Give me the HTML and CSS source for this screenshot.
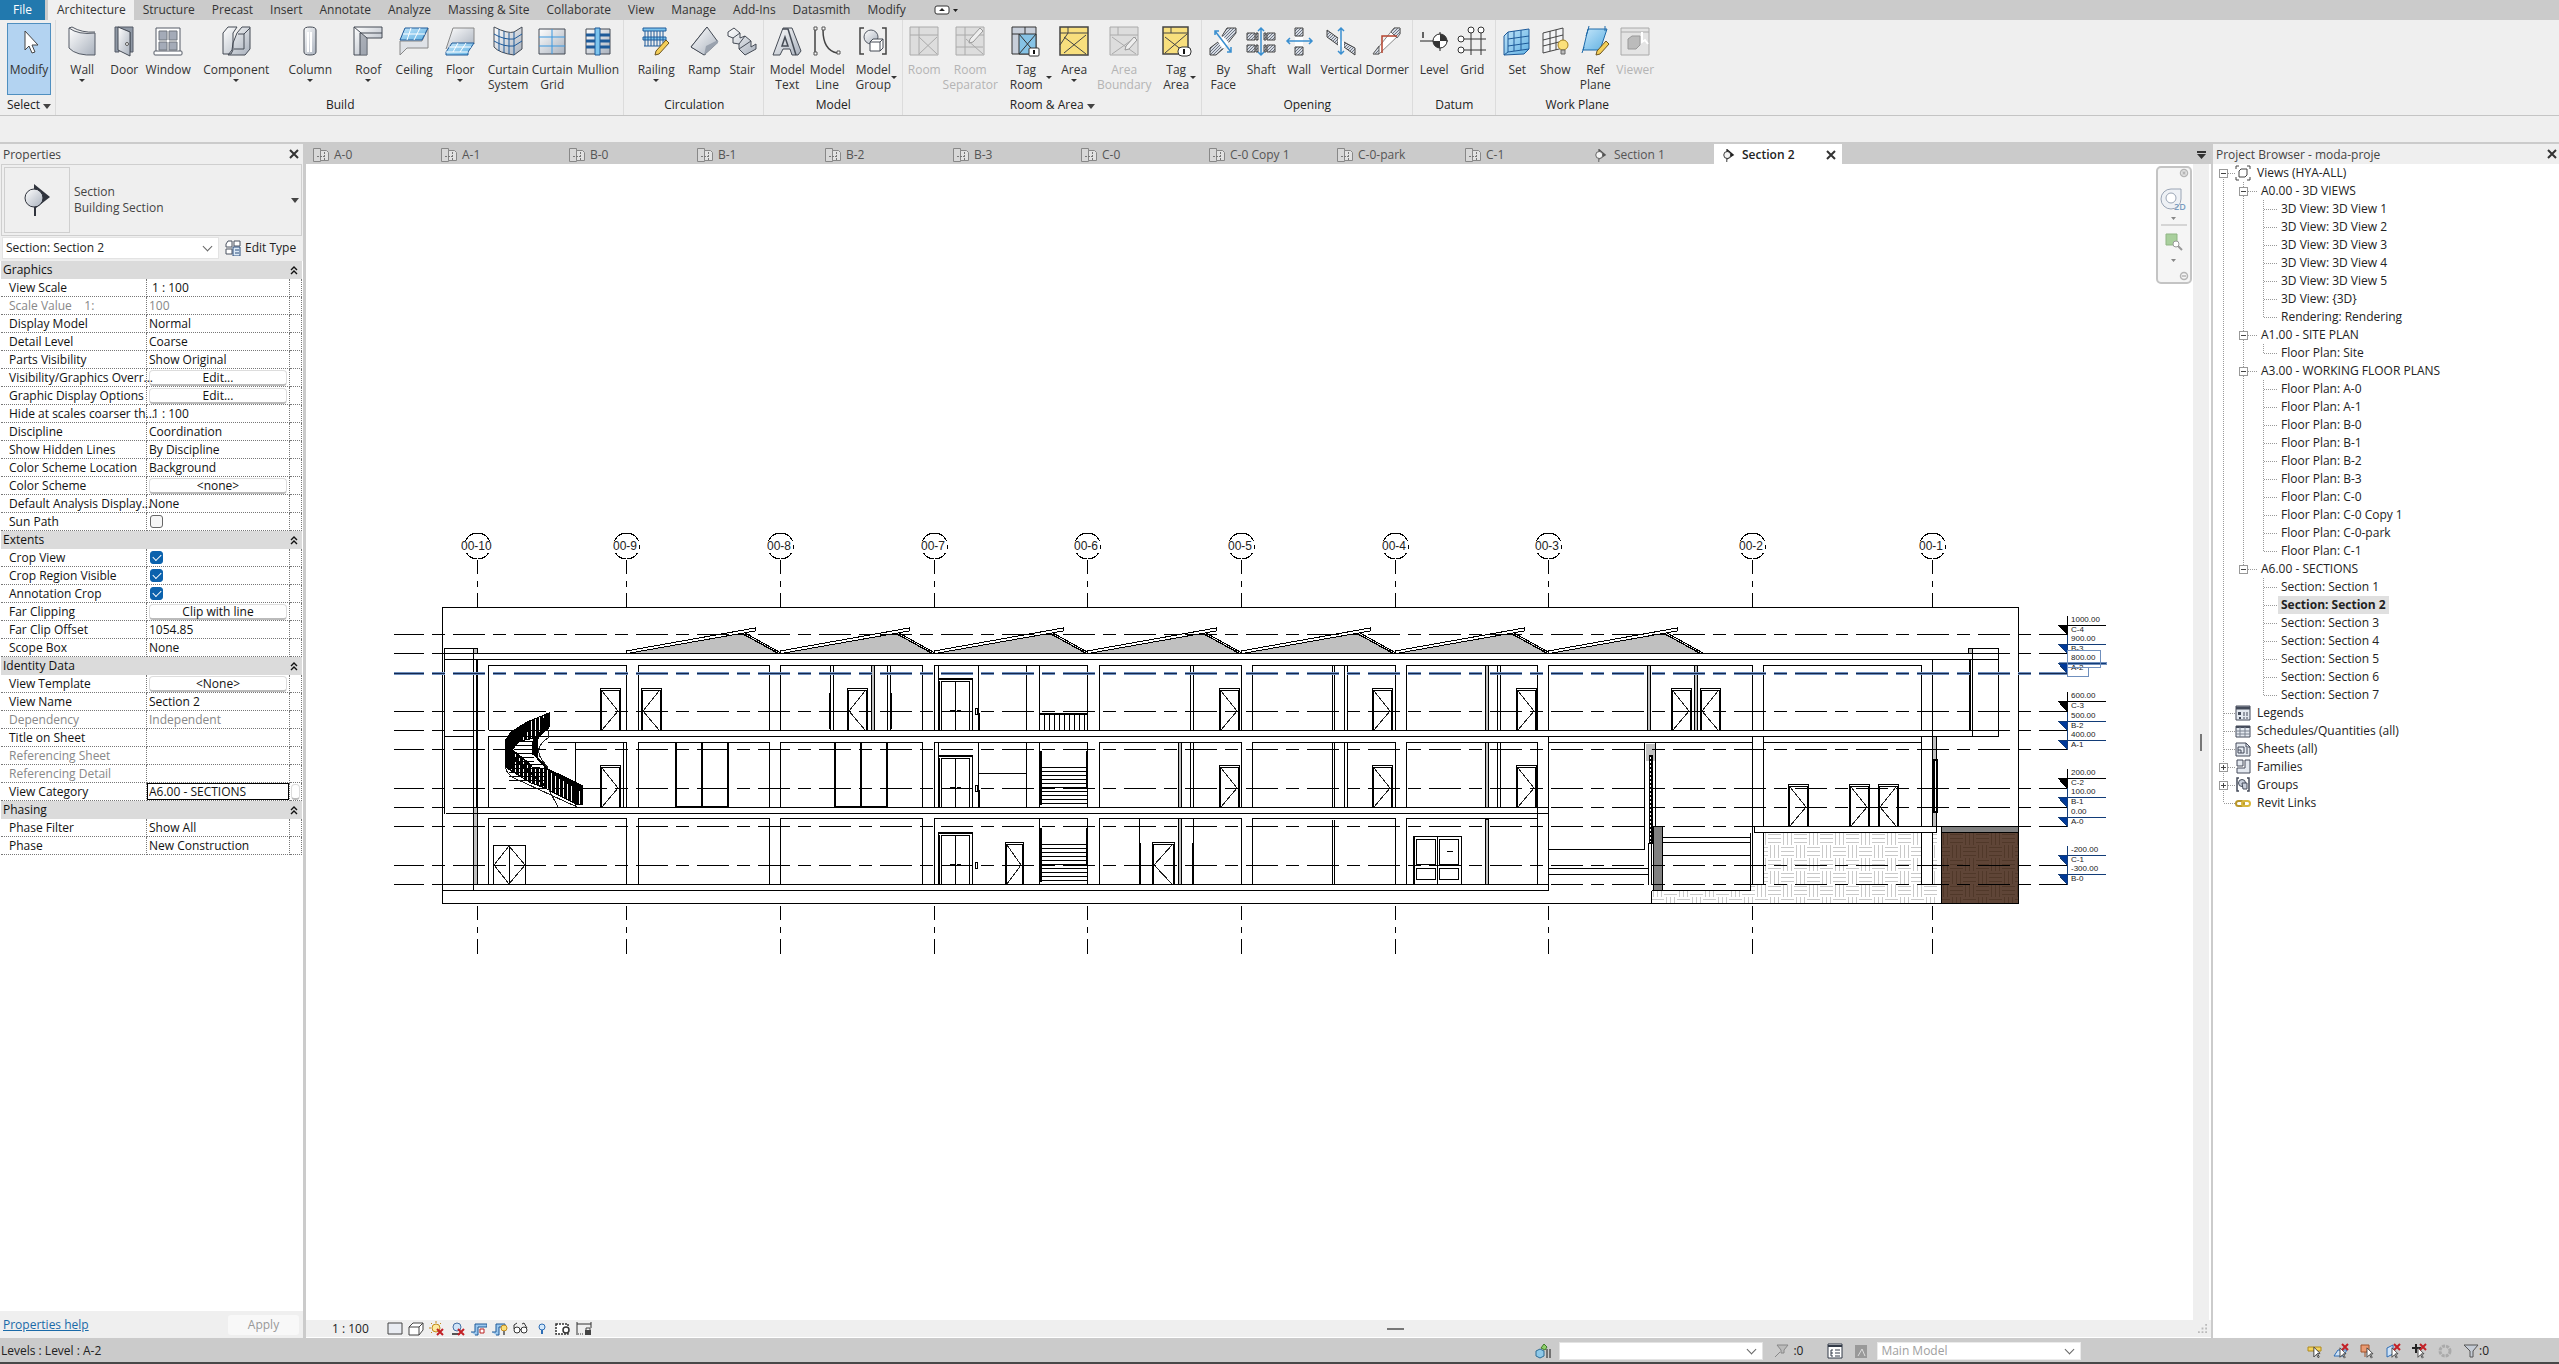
FILE: index.html
```
<!DOCTYPE html>
<html lang="en">

<head>
  <meta charset="utf-8">
  <title>moda-proje - Section 2</title>
  <link rel="stylesheet" href="styles.css">
</head>

<body>
  <svg class="defs" aria-hidden="true">
    <defs>
      <linearGradient id="metal" x1="0" y1="0" x2="1" y2="1">
        <stop offset="0" stop-color="#ffffff" />
        <stop offset="1" stop-color="#a9b1bd" />
      </linearGradient>
      <linearGradient id="sky" x1="0" y1="0" x2="1" y2="1">
        <stop offset="0" stop-color="#c4e6fa" />
        <stop offset="1" stop-color="#5fb0e2" />
      </linearGradient>
      <pattern id="slash" width="3" height="3" patternUnits="userSpaceOnUse">
        <rect width="3" height="3" fill="#d5dae2" />
        <path d="M0 3L3 0" stroke="#6c7482" stroke-width="1" />
      </pattern>
      <symbol id="plan" viewBox="0 0 18 16">
        <path d="M1.500 1.500h7v13h-7z" fill="#d8d8d8" stroke="#888" />
        <path d="M8.500 3.500h6l2 2v8h-8z" fill="#e2e2e2" stroke="#888" />
        <path d="M5 9.500h8M12.500 5v8" fill="none" stroke="#777" stroke-dasharray="2 1" />
      </symbol>
      <symbol id="section" viewBox="0 0 16 16">
        <path d="M6 1l8 7-8 5v3H5V1z" />
        <circle cx="6" cy="8" r="4" fill="#f4f4f4" stroke="currentColor" />
      </symbol>
      <symbol id="close" viewBox="0 0 10 10">
        <path d="M1 1l8 8M9 1L1 9" fill="none" stroke="#333" stroke-width="2" />
      </symbol>
      <symbol id="up" viewBox="0 0 8 10">
        <path d="M1 5l3-3 3 3M1 9l3-3 3 3" fill="none" stroke="#111" stroke-width="1.4" />
      </symbol>
      <symbol id="cross" viewBox="0 0 8 8">
        <path d="M1 1l6 6M7 1L1 7" fill="none" stroke="#c32026" stroke-width="2" />
      </symbol>
      <symbol id="arrow" viewBox="0 0 9 14">
        <path d="M1 1v11l3-3 2 4 1-1-2-4h3z" fill="#fff" stroke="#333" />
      </symbol>
    </defs>
  </svg>

  <nav class="menu">
    <a class="file" href="#">File</a>
    <a class="current" href="#">Architecture</a>
    <a href="#">Structure</a>
    <a href="#">Precast</a>
    <a href="#">Insert</a>
    <a href="#">Annotate</a>
    <a href="#">Analyze</a>
    <a href="#">Massing &amp; Site</a>
    <a href="#">Collaborate</a>
    <a href="#">View</a>
    <a href="#">Manage</a>
    <a href="#">Add-Ins</a>
    <a href="#">Datasmith</a>
    <a href="#">Modify</a>
    <button class="minimize" aria-label="Minimize ribbon">
      <svg width="26" height="10" viewBox="0 0 26 10">
        <rect x="1" y="1" width="14" height="8" rx="2" fill="#fff" stroke="#333" />
        <path d="M5 6l3-3 3 3zM19 4h5l-2.500 3z" fill="#222" />
      </svg>
    </button>
  </nav>

  <div class="ribbon">
    <section class="panel select">
      <div class="tools">
        <button class="tool w44 active"><svg viewBox="0 0 32 32"><path d="M12 6v19l4-4 3 7 3-1-3-7h6z" fill="#fff" stroke="#444" /></svg>Modify</button>
      </div>
      <h2>Select <i class="caret"></i></h2>
    </section>

    <section class="panel">
      <div class="tools">
        <button class="tool w44"><svg viewBox="0 0 32 32"><path d="M3 3q9 7 26 5v22Q10 31 3 23z" fill="url(#metal)" stroke="#555b66" /><path d="M3 3l3-1q10 6 23 5" fill="none" stroke="#555b66" /></svg>Wall<i class="drop"></i></button>
        <button class="tool w40"><svg viewBox="0 0 32 32"><path d="M7 27V2h18v25h-3V7L11 3v24z" fill="#8f98a5" stroke="#555b66" /><path d="M10 2l12 5v24l-12-6z" fill="url(#metal)" stroke="#454b55" /><circle cx="19" cy="19" r="1.500" fill="#fff" stroke="#555" /></svg>Door</button>
        <button class="tool w48"><svg viewBox="0 0 32 32"><path d="M4 3h24v24H4z" fill="#fff" stroke="#555b66" /><path d="M7 6h8v9H7zM17 6h8v9h-8zM7 17h8v8H7zM17 17h8v8h-8z" fill="#a4abb8" stroke="#70767f" /><rect x="2" y="26" width="28" height="4" rx="1" fill="#fff" stroke="#555b66" /></svg>Window</button>
        <button class="tool w88"><svg viewBox="0 0 32 32"><path d="M3 8l5-6h9l-4 6v17l-2 4H3zM13 18l4-10 5-6h8v22l-5 6H8l4-5z" fill="url(#metal)" stroke="#454b55" /><path d="M18 9h6v15H14M24 9l6-6" fill="none" stroke="#454b55" /></svg>Component<i class="drop"></i></button>
        <button class="tool w60"><svg viewBox="0 0 32 32"><path d="M10 5q0-3 6-3t6 3v22q0 3-6 3t-6-3z" fill="url(#metal)" stroke="#454b55" /><path d="M14 7v20M17 7v20" stroke="#fff" stroke-width="2" /></svg>Column<i class="drop"></i></button>
        <button class="tool w56"><svg viewBox="0 0 32 32"><path d="M2 2h28v11H15v17H2z" fill="url(#metal)" stroke="#454b55" /><path d="M8 8l7 5v17H8z" fill="#858c98" opacity=".6" /><path d="M2 2l13 11M8 8v22M8 8h22" fill="none" stroke="#454b55" /></svg>Roof<i class="drop"></i></button>
        <button class="tool w36"><svg viewBox="0 0 32 32"><path d="M2 16h22l6-13v20H9l-7 7z" fill="#dfe2e7" stroke="#888" /><path d="M7 3h23l-6 12H2z" fill="url(#sky)" stroke="#1e5a99" /><path d="M13 3L9 15M22 3l-6 12M5 9h22" stroke="#fff" /></svg>Ceiling</button>
        <button class="tool w56"><svg viewBox="0 0 32 32"><path d="M2 24l7-21h21v16" fill="url(#metal)" stroke="#888" /><path d="M8 18h22l-6 9v3H2v-3z" fill="url(#sky)" stroke="#1e5a99" /><path d="M2 27h22M14 18l-5 9M22 18l-6 9M5 22h22" stroke="#fff" /></svg>Floor<i class="drop"></i></button>
        <button class="tool w40"><svg viewBox="0 0 32 32"><path d="M2 2q14 7 20 5l8-5v22l-8 6Q7 28 2 22z" fill="url(#metal)" stroke="#454b55" /><path d="M22 7v23M17 8v21M12 6v22M7 4v22M2 9q10 6 20 5l8-5M2 16q10 6 20 5l8-5" fill="none" stroke="#1e5a99" /></svg>Curtain<br>System</button>
        <button class="tool w48"><svg viewBox="0 0 32 32"><path d="M3 4h26v25H3z" fill="url(#metal)" stroke="#454b55" /><path d="M16 4v25M3 12h26M3 21h26" stroke="#3a98e0" /></svg>Curtain<br>Grid</button>
        <button class="tool w44"><svg viewBox="0 0 32 32"><path d="M4 4h24v25H4z" fill="url(#metal)" stroke="#454b55" /><path d="M4 10h24M4 16h24M4 22h24" stroke="#1e5a99" stroke-width="3" /><path d="M13 3h5v27h-5z" fill="#7cc4ee" stroke="#1e5a99" /></svg>Mullion</button>
      </div>
      <h2>Build</h2>
    </section>

    <section class="panel">
      <div class="tools">
        <button class="tool w56"><svg viewBox="0 0 32 32"><path d="M3 3h23v3H3zM3 12h23v3H3zM4 21h18" fill="#7cc4ee" stroke="#1e5a99" /><path d="M5 6v15M8 6v15M11 6v15M14 6v15M17 6v15M20 6v15M23 6v12" stroke="#1e5a99" /><path d="M26 15l3 3-10 11-4 1 1-4z" fill="#f5cf58" stroke="#6b5420" /></svg>Railing<i class="drop"></i></button>
        <button class="tool w40"><svg viewBox="0 0 32 32"><path d="M3 22L19 2l-2 28z" fill="#fff" stroke="#454b55" /><path d="M3 22L19 2l11 15-14 13z" fill="url(#metal)" stroke="#454b55" /><path d="M16 30l2-9L30 15v3z" fill="#9aa2ae" /></svg>Ramp</button>
        <button class="tool w36"><svg viewBox="0 0 32 32"><path d="M2 7l6-4 6 5v5l5-2 6 5v6l5-3v5L19 30l-6-6v-5l-6-1v-5l-5-2z" fill="url(#metal)" stroke="#454b55" /><path d="M14 8l-7 5M19 11l-6 8M25 16l-12 8" stroke="#454b55" /></svg>Stair</button>
      </div>
      <h2>Circulation</h2>
    </section>

    <section class="panel tight">
      <div class="tools">
        <button class="tool w40"><svg viewBox="0 0 32 32"><path d="M12 3h9l9 23-3 4h-6l-2-6h-7l-3 6H2z" fill="url(#metal)" stroke="#454b55" /><path d="M12 4h5l8 26M14 12l-3 9h6z" fill="none" stroke="#454b55" stroke-width="1.500" /></svg>Model<br>Text</button>
        <button class="tool w40"><svg viewBox="0 0 32 32"><path d="M4 5v23M12 5q0 20 14 23" fill="none" stroke="#444" stroke-width="1.500" /><path d="M3 2h3v3H3zM3 27h3v3H3zM11 2h3v3h-3zM26 26h3v3h-3z" fill="#fff" stroke="#555" /></svg>Model<br>Line</button>
        <button class="tool w52"><svg viewBox="0 0 32 32"><path d="M7 3H3v26h4M25 3h4v26h-4" fill="none" stroke="#444" stroke-width="1.500" /><circle cx="14" cy="12" r="7" fill="url(#metal)" stroke="#555b66" /><path d="M13 17l3-3h10v9l-3 3H13zM13 17h10v9M23 17l3-3" fill="#fff" stroke="#454b55" /></svg>Model<br>Group<i class="drop side"></i></button>
      </div>
      <h2>Model</h2>
    </section>

    <section class="panel tight">
      <div class="tools">
        <button class="tool w36" disabled><svg viewBox="0 0 32 32"><path d="M2 2h28v28H2z" fill="#ddd" stroke="#aaa" /><path d="M2 10h28M11 2v28M11 12l18 17M29 12L11 29" fill="none" stroke="#aaa" /></svg>Room</button>
        <button class="tool w56" disabled><svg viewBox="0 0 32 32"><path d="M2 2h28v28H2z" fill="#ddd" stroke="#aaa" /><path d="M2 10h28M11 2v28M12 14l17 15M2 22h27" fill="none" stroke="#aaa" /><path d="M26 3l3 3-10 11-4 1 1-4z" fill="#eee" stroke="#999" /></svg>Room<br>Separator</button>
        <button class="tool w56"><svg viewBox="0 0 32 32"><path d="M2 2h24v27H2z" fill="#c8cfda" stroke="#333" /><path d="M9 9h17v20H9z" fill="#86c3e6" stroke="#333" /><path d="M9 9l17 20M26 9L9 29M2 9h7M15 2v7" stroke="#333" /><rect x="19" y="23" width="10" height="8" rx="1" fill="#fff" stroke="#333" /><path d="M24 25v4" stroke="#111" stroke-width="2" /></svg>Tag<br>Room<i class="drop side"></i></button>
        <button class="tool w40"><svg viewBox="0 0 32 32"><path d="M2 2h28v28H2z" fill="#f8df7d" stroke="#444" stroke-width="1.500" /><path d="M2 8h28M10 2v6M10 8L2 20M6 12l22 17M28 10L6 28" fill="none" stroke="#444" /></svg>Area<i class="drop"></i></button>
        <button class="tool w60" disabled><svg viewBox="0 0 32 32"><path d="M2 2h28v28H2z" fill="#ddd" stroke="#aaa" /><path d="M2 10h28M10 2v8M4 12l24 17M28 12L4 29" fill="none" stroke="#aaa" /><path d="M26 12l3 3-8 9-4 1 1-4z" fill="#eee" stroke="#999" /></svg>Area<br>Boundary</button>
        <button class="tool w44"><svg viewBox="0 0 32 32"><path d="M3 2h25v27H3z" fill="#f8df7d" stroke="#444" stroke-width="1.500" /><path d="M3 8h25M11 2v6M5 12l22 17M27 9L5 28" stroke="#444" /><rect x="18" y="22" width="13" height="9" rx="4" fill="#fff" stroke="#333" /><path d="M24 24v5" stroke="#111" stroke-width="2" /></svg>Tag<br>Area<i class="drop side"></i></button>
      </div>
      <h2>Room &amp; Area <i class="caret"></i></h2>
    </section>

    <section class="panel tight">
      <div class="tools">
        <button class="tool w36"><svg viewBox="0 0 32 32"><path d="M20 3h9v5l-8 10-6-7zM3 23l8-6 6 6-8 7H3z" fill="url(#slash)" stroke="#444" /><path d="M11 17l5-6 6 7-6 6z" fill="#fff" /><path d="M8 6l16 21M8 10V6h4M24 22v5h-4" fill="none" stroke="#3a8fd0" stroke-width="1.500" /></svg>By<br>Face</button>
        <button class="tool w40"><svg viewBox="0 0 32 32"><path d="M2 8h8v7H2zM22 8h8v7h-8zM2 20h8v7H2zM22 20h8v7h-8zM11 8h2v7h-2zM19 8h2v7h-2zM11 20h2v7h-2zM19 20h2v7h-2z" fill="url(#slash)" stroke="#444" /><path d="M16 3v27M13 6l3-3 3 3M13 27l3 3 3-3" fill="none" stroke="#3a8fd0" stroke-width="1.500" /></svg>Shaft</button>
        <button class="tool w36"><svg viewBox="0 0 32 32"><path d="M12 3h8v8h-8zM12 22h8v8h-8z" fill="url(#slash)" stroke="#444" /><path d="M12 12h8v9h-8z" fill="#fff" /><path d="M4 16h25M7 13l-3 3 3 3M26 13l3 3-3 3" fill="none" stroke="#3a8fd0" stroke-width="1.500" /></svg>Wall</button>
        <button class="tool w48"><svg viewBox="0 0 32 32"><path d="M2 5l11 8v7L2 12zM19 17l11 6v7l-11-8z" fill="url(#slash)" stroke="#444" /><path d="M13 13l6 4v6l-6-3z" fill="#fff" /><path d="M16 3v26M13 6l3-3 3 3M13 26l3 3 3-3" fill="none" stroke="#3a8fd0" stroke-width="1.500" /></svg>Vertical</button>
        <button class="tool w44"><svg viewBox="0 0 32 32"><path d="M2 29L23 3h6v6L8 29z" fill="#fff" stroke="#888" /><path d="M20 7l3-4h6v6l-3 4zM2 29l6-8v8z" fill="url(#slash)" stroke="#666" /><path d="M11 28V11h15" fill="none" stroke="#b5432e" stroke-width="1.500" /></svg>Dormer</button>
      </div>
      <h2>Opening</h2>
    </section>

    <section class="panel tight">
      <div class="tools">
        <button class="tool w36"><svg viewBox="0 0 32 32"><path d="M2 16h28M22 7v19" stroke="#222" /><circle cx="22" cy="16" r="7" fill="#fff" stroke="#222" /><path d="M22 9v14a7 7 0 0 1-7-7h14a7 7 0 0 0-7-7z" fill="#333" /><path d="M5 7v6" stroke="#333" stroke-width="1.500" /></svg>Level</button>
        <button class="tool w40"><svg viewBox="0 0 32 32"><path d="M15 7v23M25 7v23M6 14h24M6 25h24" stroke="#333" /><circle cx="15" cy="5" r="3" fill="#fff" stroke="#333" /><circle cx="25" cy="5" r="3" fill="#fff" stroke="#333" /><circle cx="5" cy="14" r="3" fill="#fff" stroke="#333" /><circle cx="5" cy="25" r="3" fill="#fff" stroke="#333" /></svg>Grid</button>
      </div>
      <h2>Datum</h2>
    </section>

    <section class="panel tight">
      <div class="tools">
        <button class="tool w36"><svg viewBox="0 0 32 32"><path d="M3 11l4-4 21-3v20l-5 5-20 1z" fill="url(#sky)" stroke="#1e5a99" /><path d="M7 7v20l21-3M13 6v20M20 5v20M7 14l21-3M7 21l21-3M3 30l4-3" fill="none" stroke="#1e5a99" /></svg>Set</button>
        <button class="tool w40"><svg viewBox="0 0 32 32"><path d="M4 8l20-5v20L4 28z" fill="#f3f4f6" stroke="#444" /><path d="M11 6v20M17 5v20M4 15l20-5M4 21l20-5" stroke="#444" /><circle cx="24" cy="20" r="5" fill="#fbe07a" stroke="#a5811f" /><path d="M22 25h4v4h-4z" fill="#bbb" stroke="#666" /></svg>Show</button>
        <button class="tool w40"><svg viewBox="0 0 32 32"><path d="M9 4h19l-7 21H4z" fill="url(#sky)" stroke="#1e6aa9" /><path d="M10 1l-1 4-2 6M3 28l2-6M26 1v5" stroke="#1e6aa9" /><path d="M27 16l3 3-9 10-4 1 1-4z" fill="#f5cf58" stroke="#6b5420" /></svg>Ref<br>Plane</button>
        <button class="tool w40" disabled><svg viewBox="0 0 32 32"><path d="M2 3h28v27H2zM2 7h28" fill="#e4e4e4" stroke="#aaa" /><path d="M9 14l4-3h8v9l-4 4H9z" fill="#bbb" stroke="#999" /><path d="M23 7v10l3-2 3 4" fill="none" stroke="#fff" stroke-width="2" /></svg>Viewer</button>
      </div>
      <h2>Work Plane</h2>
    </section>
  </div>
  <div class="options"></div>

  <main>
    <aside class="properties">
      <header class="title">Properties <button class="x" aria-label="Close properties"><svg width="10" height="10"><use href="#close" /></svg></button></header>
      <div class="type">
        <div class="thumb">
          <svg width="28" height="34" viewBox="0 0 28 34"><path d="M11 1l16 13-14 11v8h-2z" fill="#30343d" /><circle cx="11" cy="15" r="9" fill="url(#metal)" stroke="#30343d" /></svg>
        </div>
        <p>Section<br>Building Section</p>
        <i class="caret"></i>
      </div>
      <div class="instance">
        <span class="combo"><select aria-label="Instance"><option>Section: Section 2</option></select></span>
        <button class="edit-type"><svg width="16" height="16" viewBox="0 0 16 16"><path d="M1 4l2-3h4v6H1zM1 9h6v5H1zM9 1h6v5H9z" fill="#fff" stroke="#4a5260" /><path d="M8 7h7v9H8z" fill="#dbe9f6" stroke="#2c4f7c" /><path d="M10 10h4M10 13h4" stroke="#2c4f7c" /></svg>Edit Type</button>
      </div>

      <div class="grid-wrap">
        <table class="grid">
          <colgroup>
            <col class="name">
            <col class="value">
            <col class="link">
          </colgroup>
          <tr class="group"><th colspan="2">Graphics</th><th><svg width="8" height="10"><use href="#up" /></svg></th></tr>
          <tr><td>View Scale</td><td class="in">1 : 100</td><td></td></tr>
          <tr class="off"><td>Scale Value &nbsp;&nbsp; 1:</td><td>100</td><td></td></tr>
          <tr><td>Display Model</td><td>Normal</td><td></td></tr>
          <tr><td>Detail Level</td><td>Coarse</td><td></td></tr>
          <tr><td>Parts Visibility</td><td>Show Original</td><td></td></tr>
          <tr><td>Visibility/Graphics Overr...</td><td><button>Edit...</button></td><td></td></tr>
          <tr><td>Graphic Display Options</td><td><button>Edit...</button></td><td></td></tr>
          <tr><td>Hide at scales coarser th...</td><td class="in">1 : 100</td><td></td></tr>
          <tr><td>Discipline</td><td>Coordination</td><td></td></tr>
          <tr><td>Show Hidden Lines</td><td>By Discipline</td><td></td></tr>
          <tr><td>Color Scheme Location</td><td>Background</td><td></td></tr>
          <tr><td>Color Scheme</td><td><button>&lt;none&gt;</button></td><td></td></tr>
          <tr><td>Default Analysis Display...</td><td>None</td><td></td></tr>
          <tr><td><label for="sun">Sun Path</label></td><td><input type="checkbox" id="sun"></td><td></td></tr>
          <tr class="group"><th colspan="2">Extents</th><th><svg width="8" height="10"><use href="#up" /></svg></th></tr>
          <tr><td><label for="crop">Crop View</label></td><td><input type="checkbox" id="crop" checked></td><td></td></tr>
          <tr><td><label for="region">Crop Region Visible</label></td><td><input type="checkbox" id="region" checked></td><td></td></tr>
          <tr><td><label for="annotation">Annotation Crop</label></td><td><input type="checkbox" id="annotation" checked></td><td></td></tr>
          <tr><td>Far Clipping</td><td><button>Clip with line</button></td><td></td></tr>
          <tr><td>Far Clip Offset</td><td>1054.85</td><td></td></tr>
          <tr><td>Scope Box</td><td>None</td><td></td></tr>
          <tr class="group"><th colspan="2">Identity Data</th><th><svg width="8" height="10"><use href="#up" /></svg></th></tr>
          <tr><td>View Template</td><td><button>&lt;None&gt;</button></td><td></td></tr>
          <tr><td>View Name</td><td>Section 2</td><td></td></tr>
          <tr class="off"><td>Dependency</td><td>Independent</td><td></td></tr>
          <tr><td>Title on Sheet</td><td></td><td></td></tr>
          <tr class="off"><td>Referencing Sheet</td><td></td><td></td></tr>
          <tr class="off"><td>Referencing Detail</td><td></td><td></td></tr>
          <tr><td><label for="category">View Category</label></td><td class="field"><input type="text" id="category" value="A6.00 - SECTIONS"></td><td><button aria-label="Browse"></button></td></tr>
          <tr class="group"><th colspan="2">Phasing</th><th><svg width="8" height="10"><use href="#up" /></svg></th></tr>
          <tr><td>Phase Filter</td><td>Show All</td><td></td></tr>
          <tr><td>Phase</td><td>New Construction</td><td></td></tr>
        </table>
      </div>
      <footer><a href="#">Properties help</a><button disabled>Apply</button></footer>
    </aside>

    <section class="workspace">
      <div class="docs">
        <button><svg width="18" height="16"><use href="#plan" /></svg>A-0</button>
        <button><svg width="18" height="16"><use href="#plan" /></svg>A-1</button>
        <button><svg width="18" height="16"><use href="#plan" /></svg>B-0</button>
        <button><svg width="18" height="16"><use href="#plan" /></svg>B-1</button>
        <button><svg width="18" height="16"><use href="#plan" /></svg>B-2</button>
        <button><svg width="18" height="16"><use href="#plan" /></svg>B-3</button>
        <button><svg width="18" height="16"><use href="#plan" /></svg>C-0</button>
        <button><svg width="18" height="16"><use href="#plan" /></svg>C-0 Copy 1</button>
        <button><svg width="18" height="16"><use href="#plan" /></svg>C-0-park</button>
        <button><svg width="18" height="16"><use href="#plan" /></svg>C-1</button>
        <button class="sec"><svg width="18" height="14"><use href="#section" /></svg>Section 1</button>
        <button class="sec open"><svg width="18" height="14"><use href="#section" /></svg>Section 2<svg class="x" width="10" height="10"><use href="#close" /></svg></button>
        <button class="more" aria-label="All views"><svg width="9" height="8" viewBox="0 0 9 8"><path d="M0 0h9v2H0zM0 3h9L4.500 8z" fill="#333" /></svg></button>
      </div>
      <div class="view">
        <svg class="drawing" id="drawing" viewBox="306 164 1887 1156"></svg>
        <div class="navbar">
          <svg viewBox="0 0 36 118">
            <g fill="none" stroke="#b5b5b5" stroke-width="1.500">
              <circle cx="28" cy="7" r="3.500" /><path d="M26.500 5.500l3 3M29.500 5.500l-3 3" />
              <circle cx="28" cy="110" r="3.500" /><path d="M26 110h4" />
              <path d="M5 59h26" stroke-width="1" />
            </g>
            <path d="M15 23h10v10a10 10 0 1 1-10-10z" fill="#eef1f5" stroke="#9aa5b5" />
            <circle cx="15" cy="32" r="5" fill="#fff" stroke="#9aa5b5" />
            <text x="18" y="44" class="nav-2d">2D</text>
            <path d="M15 51h5l-2.500 3zM15 93h5l-2.500 3z" fill="#888" />
            <path d="M10 68h11v11H10z" fill="#a8cf9c" stroke="#8fb583" />
            <circle cx="20" cy="78" r="3" fill="#fff" stroke="#999" /><path d="M22 80l4 4" stroke="#999" stroke-width="2" />
          </svg>
        </div>
        <div class="vscroll"><span></span></div>
      </div>
      <div class="viewbar">
        <button class="scale">1 : 100</button>
        <button aria-label="Detail level"><svg viewBox="0 0 16 16"><path d="M1 2h14v11H1z" fill="#e9ecf2" stroke="#444" /></svg></button>
        <button aria-label="Visual style"><svg viewBox="0 0 16 16"><path d="M1 6l4-4h10v7l-4 5H1zM1 6h10v8M11 6l4-4" fill="#fff" stroke="#444" /></svg></button>
        <button aria-label="Sun path"><svg viewBox="0 0 16 16"><circle cx="7" cy="7" r="4" fill="#fdeaa0" stroke="#c28a1c" /><path d="M7 0v2M0 7h2M2 2l1 1M12 2l-1 1M2 12l1-1" stroke="#c28a1c" /><use href="#cross" x="7" y="7" width="8" height="8" /></svg></button>
        <button aria-label="Shadows"><svg viewBox="0 0 16 16"><circle cx="7" cy="6" r="4" fill="#cfe3f7" stroke="#4770a5" /><path d="M2 13h8" stroke="#555" stroke-width="2" /><use href="#cross" x="7" y="7" width="8" height="8" /></svg></button>
        <button aria-label="Crop view"><svg viewBox="0 0 16 16"><path d="M0 11h4V3h12v3H7v8H4" fill="#9cc8ee" stroke="#1e5a99" /><path d="M9 8h4v4H9z" fill="#fff" stroke="#b22" /></svg></button>
        <button aria-label="Show crop region"><svg viewBox="0 0 16 16"><path d="M0 11h4V3h9v3H7v8H4" fill="#9cc8ee" stroke="#1e5a99" /><circle cx="12" cy="7" r="3" fill="#fbe07a" stroke="#c28a1c" /><path d="M12 10v4" stroke="#777" stroke-width="2" /></svg></button>
        <button aria-label="Temporary hide"><svg viewBox="0 0 16 16"><path d="M1 8V4l3-2M7 9l1-1M14 7l-3-5-2 1" fill="none" stroke="#333" /><circle cx="4" cy="9" r="3" fill="#fff" stroke="#333" /><circle cx="11" cy="9" r="3" fill="#fff" stroke="#333" /></svg></button>
        <button aria-label="Reveal hidden"><svg viewBox="0 0 16 16"><circle cx="8" cy="6" r="3" fill="#d5e9fb" stroke="#2d6db5" /><path d="M8 9v4" stroke="#2d6db5" stroke-width="2" /></svg></button>
        <button aria-label="Temporary view properties"><svg viewBox="0 0 16 16"><path d="M1 3h12v10H1z" fill="#fff" stroke="#333" stroke-dasharray="2 1" stroke-width="1.500" /><circle cx="11" cy="9" r="3" fill="#fff" stroke="#333" stroke-width="1.500" /></svg></button>
        <button aria-label="Reveal constraints"><svg viewBox="0 0 16 16"><path d="M1 1v13M15 1v6M1 3h14" stroke="#333" /><path d="M2 13h6" stroke="#333" stroke-dasharray="1 1" /><path d="M9 9h6v5H9z" fill="#444" /><path d="M10 9V7h4v2" fill="none" stroke="#444" /></svg></button>
        <span class="hthumb"></span>
        <svg class="grip" viewBox="0 0 10 10"><path d="M8 0h2v2H8zM8 4h2v2H8zM8 8h2v2H8zM4 4h2v2H4zM4 8h2v2H4zM0 8h2v2H0z" fill="#bbb" /></svg>
      </div>
    </section>

    <aside class="browser">
      <header class="title">Project Browser - moda-proje <button class="x" aria-label="Close browser"><svg width="10" height="10"><use href="#close" /></svg></button></header>
      <ul class="tree">
        <li>
          <div class="row top"><button class="box" aria-label="Collapse"></button><i></i><svg viewBox="0 0 16 16"><path d="M1 4V1h3M12 1h3v3M15 12v3h-3M4 15H1v-3M4 6l2-2h6v6l-2 2H4z" fill="none" stroke="#444" /></svg><span>Views (HYA-ALL)</span></div>
          <ul>
            <li>
              <div class="row mid"><button class="box" aria-label="Collapse"></button><i></i><span>A0.00 - 3D VIEWS</span></div>
              <ul class="leaves">
                <li><i></i><span>3D View: 3D View 1</span></li>
                <li><i></i><span>3D View: 3D View 2</span></li>
                <li><i></i><span>3D View: 3D View 3</span></li>
                <li><i></i><span>3D View: 3D View 4</span></li>
                <li><i></i><span>3D View: 3D View 5</span></li>
                <li><i></i><span>3D View: {3D}</span></li>
                <li><i></i><span>Rendering: Rendering</span></li>
              </ul>
            </li>
            <li>
              <div class="row mid"><button class="box" aria-label="Collapse"></button><i></i><span>A1.00 - SITE PLAN</span></div>
              <ul class="leaves">
                <li><i></i><span>Floor Plan: Site</span></li>
              </ul>
            </li>
            <li>
              <div class="row mid"><button class="box" aria-label="Collapse"></button><i></i><span>A3.00 - WORKING FLOOR PLANS</span></div>
              <ul class="leaves">
                <li><i></i><span>Floor Plan: A-0</span></li>
                <li><i></i><span>Floor Plan: A-1</span></li>
                <li><i></i><span>Floor Plan: B-0</span></li>
                <li><i></i><span>Floor Plan: B-1</span></li>
                <li><i></i><span>Floor Plan: B-2</span></li>
                <li><i></i><span>Floor Plan: B-3</span></li>
                <li><i></i><span>Floor Plan: C-0</span></li>
                <li><i></i><span>Floor Plan: C-0 Copy 1</span></li>
                <li><i></i><span>Floor Plan: C-0-park</span></li>
                <li><i></i><span>Floor Plan: C-1</span></li>
              </ul>
            </li>
            <li class="end">
              <div class="row mid"><button class="box" aria-label="Collapse"></button><i></i><span>A6.00 - SECTIONS</span></div>
              <ul class="leaves">
                <li><i></i><span>Section: Section 1</span></li>
                <li><i></i><span class="picked">Section: Section 2</span></li>
                <li><i></i><span>Section: Section 3</span></li>
                <li><i></i><span>Section: Section 4</span></li>
                <li><i></i><span>Section: Section 5</span></li>
                <li><i></i><span>Section: Section 6</span></li>
                <li><i></i><span>Section: Section 7</span></li>
              </ul>
            </li>
          </ul>
        </li>
        <li class="row top plain"><i></i><svg viewBox="0 0 16 16"><path d="M1 1h14v14H1z" fill="#e4e9f0" stroke="#444b5a" /><path d="M1 3h14" stroke="#444b5a" stroke-width="3" /><path d="M3 7h3v3H3zM4 12h2v2H4z" fill="#444b5a" /><path d="M8 8h6M8 10h5M8 13h6" stroke="#444b5a" stroke-dasharray="2 1" /></svg><span>Legends</span></li>
        <li class="row top plain"><i></i><svg viewBox="0 0 16 16"><path d="M1 3h14v11H1z" fill="#e4e9f0" stroke="#444b5a" /><path d="M1 4h14" stroke="#444b5a" stroke-width="2" /><path d="M1 8h14M1 11h14M5 4v10M10 4v10" stroke="#7a8290" /></svg><span>Schedules/Quantities (all)</span></li>
        <li class="row top plain"><i></i><svg viewBox="0 0 16 16"><path d="M1 2h10l4 4v9H1z" fill="#e4e9f0" stroke="#444b5a" /><path d="M3 6h6v6H3zM3 9h3v3M12 7v6M11 2v4h4" fill="none" stroke="#444b5a" /></svg><span>Sheets (all)</span></li>
        <li class="row top"><button class="box plus" aria-label="Expand"></button><i></i><svg viewBox="0 0 16 16"><path d="M2 1h6v6H2zM10 1h5v13H2V9h8z" fill="#e4e9f0" stroke="#444b5a" /></svg><span>Families</span></li>
        <li class="row top"><button class="box plus" aria-label="Expand"></button><i></i><svg viewBox="0 0 16 16"><path d="M4 1H2v13h2M12 1h2v13h-2" fill="none" stroke="#444b5a" stroke-width="1.500" /><circle cx="7" cy="6" r="3.500" fill="#c9d0dc" stroke="#444b5a" /><path d="M7 6h5v6H8z" fill="#c9d0dc" stroke="#444b5a" /></svg><span>Groups</span></li>
        <li class="row top plain"><i></i><svg viewBox="0 0 16 16"><rect x="1" y="6" width="8" height="5" rx="2.500" fill="none" stroke="#b8962a" stroke-width="2" /><rect x="7" y="6" width="8" height="5" rx="2.500" fill="none" stroke="#d9b93c" stroke-width="2" /></svg><span>Revit Links</span></li>
      </ul>
    </aside>
  </main>

  <footer class="status">
    <span class="hint">Levels : Level : A-2</span>
    <svg viewBox="0 0 16 16"><path d="M1 8l4-2 4 2v5l-4 2-4-2z" fill="#8ec8e8" stroke="#2c6c94" /><path d="M6 5l3-4 3 3-2 3z" fill="#8fd06a" stroke="#3c7a2a" /><path d="M12 6v9M15 6v9" stroke="#555" stroke-width="1.500" /></svg>
    <span class="combo wide"><select aria-label="Workset"><option></option></select></span>
    <svg class="gap" viewBox="0 0 16 16"><path d="M4 2h11l-4 5v3H8V7zM2 14l5-5" fill="#bbb" stroke="#888" /></svg>
    <span class="count">:0</span>
    <svg viewBox="0 0 16 16"><path d="M1 1h14v14H1z" fill="#fff" stroke="#333b48" /><path d="M1 3h14" stroke="#333b48" stroke-width="2" /><path d="M4 7v6M4 7h2M4 10h2M4 13h2M8 7h5M8 10h5M8 13h5" stroke="#333b48" /></svg>
    <svg class="gap" viewBox="0 0 16 16"><path d="M2 2h12v13H2z" fill="#999" /><path d="M5 13l4-7 3 7" fill="none" stroke="#ddd" /></svg>
    <span class="combo wide"><select aria-label="Active design option" disabled><option>Main Model</option></select></span>
    <span class="filters">
      <svg viewBox="0 0 16 16"><path d="M1 4h13v4H1z" fill="#f3d35c" stroke="#b08a1c" /><use href="#arrow" x="6" y="3" width="8" height="13" /></svg>
      <svg viewBox="0 0 16 16"><path d="M1 13l4-6h9l-4 6z" fill="#cfe3f7" stroke="#2d6db5" /><use href="#arrow" x="6" y="4" width="8" height="12" /><use href="#cross" x="8" y="0" width="8" height="8" /></svg>
      <svg viewBox="0 0 16 16"><path d="M2 2h8v7H2zM6 9v5" fill="#e99a72" stroke="#a1532b" /><use href="#arrow" x="7" y="4" width="8" height="12" /></svg>
      <svg viewBox="0 0 16 16"><path d="M2 5l6-3v9l-6 3z" fill="#cfe3f7" stroke="#2d6db5" /><use href="#arrow" x="6" y="4" width="8" height="12" /><use href="#cross" x="8" y="0" width="8" height="8" /></svg>
      <svg viewBox="0 0 16 16"><path d="M5 1v9M1 5h9" stroke="#222" stroke-width="2" /><use href="#arrow" x="6" y="4" width="8" height="12" /><use href="#cross" x="8" y="0" width="8" height="8" /></svg>
      <svg viewBox="0 0 16 16"><circle cx="8" cy="8" r="5" fill="none" stroke="#aaa" stroke-width="3" stroke-dasharray="3 1" /></svg>
      <svg viewBox="0 0 16 16"><path d="M1 2h14l-5 6v6H7V8z" fill="#c5ccd6" stroke="#555" /></svg>
      <b>:0</b>
    </span>
  </footer>

  <script src="drawing.js"></script>
</body>

</html>
```
FILE: styles.css
```
* {
  box-sizing: border-box;
}

body {
  margin: 0;
  height: 100vh;
  display: flex;
  flex-direction: column;
  overflow: hidden;
  background: #efefef;
  color: #222;
  font-family: "Open Sans", "Noto Sans", sans-serif;
  font-size: 12px;
  line-height: 16px;
}

button,
input,
select {
  font: inherit;
  color: inherit;
}

button {
  padding: 0;
  border: none;
  background: none;
}

ul {
  margin: 0;
  padding: 0;
  list-style: none;
}

/* shared gradients and symbols, display: none would switch them off */
.defs {
  position: absolute;
  width: 0;
  height: 0;
}

.caret {
  display: inline-block;
  border: 4px solid transparent;
  border-top: 5px solid #444;
  border-bottom: none;
}

/* menu tabs */
.menu {
  display: flex;
  height: 20px;
  background: #cbcbcb;
}

.menu a {
  padding: 0 8px 0 9px;
  line-height: 20px;
  color: #333;
  text-decoration: none;
}

.menu .file {
  width: 45px;
  margin-right: 3px;
  padding: 0;
  text-align: center;
  background: #2279ae;
  color: #fff;
}

.menu .current {
  background: #f0f0f0;
}

.minimize {
  margin-left: 20px;
  display: flex;
  align-items: center;
}

/* ribbon */
.ribbon {
  display: flex;
  height: 96px;
  border-bottom: 1px solid #c4c4c4;
}

.panel {
  display: flex;
  flex-direction: column;
  padding: 3px 3px 0 4px;
  border-right: 1px solid #dcdcdc;
}

.panel.tight {
  padding-left: 3px;
}

.panel.select {
  padding-left: 7px;
  padding-right: 4px;
}

.panel:last-child {
  border-right: none;
}

.panel h2 {
  margin: 0;
  font-size: 12px;
  font-weight: normal;
  line-height: 20px;
  text-align: center;
  white-space: nowrap;
}

.tools {
  display: flex;
}

.tool {
  display: flex;
  flex-direction: column;
  align-items: center;
  position: relative;
  height: 72px;
  padding-top: 2px;
  line-height: 15px;
  text-align: center;
  white-space: nowrap;
  color: #333;
}

.tool svg {
  width: 32px;
  height: 32px;
  margin-bottom: 5px;
  flex: none;
}

.tool.active {
  background: #b3d3f1;
  outline: 1px solid #4f8fc0;
  outline-offset: -1px;
}

.tool:disabled {
  color: #b4b4b4;
}

.w36 { width: 36px; }
.w40 { width: 40px; }
.w44 { width: 44px; }
.w48 { width: 48px; }
.w52 { width: 52px; }
.w56 { width: 56px; }
.w60 { width: 60px; }
.w88 { width: 88px; }

.drop {
  margin-top: 2px;
  border: 3px solid transparent;
  border-top-color: #333;
  border-bottom: none;
}

.drop.side {
  position: absolute;
  right: 2px;
  bottom: 16px;
}

.options {
  height: 28px;
  border-bottom: 2px solid #cbcbcb;
}

main {
  flex: 1;
  min-height: 0;
  display: grid;
  grid-template-columns: 306px 1fr 348px;
}

.title {
  display: flex;
  justify-content: space-between;
  height: 20px;
  padding: 0 4px 0 3px;
  line-height: 22px;
  color: #444;
}

.title .x {
  display: flex;
  align-items: center;
}

/* properties palette */
.properties {
  display: flex;
  flex-direction: column;
  border-right: 3px solid #cbcbcb;
}

.type {
  display: flex;
  align-items: center;
  height: 72px;
  margin: 0 1px;
  padding: 2px;
  border: 1px solid #cfcfcf;
  color: #444;
}

.type p {
  flex: 1;
  margin: 0 0 0 4px;
}

.thumb {
  display: flex;
  align-items: center;
  justify-content: center;
  width: 66px;
  height: 66px;
  border: 1px solid #cfcfcf;
}

.instance {
  display: flex;
  height: 25px;
  padding: 1px 2px 2px;
}

.combo {
  display: grid;
  width: 217px;
  background: #fff;
}

.combo::after {
  content: "";
  grid-area: 1 / 1;
  width: 6px;
  height: 6px;
  margin: 0 8px 4px 0;
  place-self: center end;
  border: solid #666;
  border-width: 0 1px 1px 0;
  rotate: 45deg;
  pointer-events: none;
}

.combo select {
  grid-area: 1 / 1;
  width: 100%;
  padding: 0 20px 0 3px;
  border: 1px solid #e3e3e3;
  background: #fff;
  appearance: none;
}

.edit-type {
  display: flex;
  align-items: center;
  gap: 4px;
  margin-left: 6px;
  white-space: nowrap;
}

.grid-wrap {
  flex: 1;
  padding: 0 1px;
  background: #fff;
}

.grid {
  width: 301px;
  table-layout: fixed;
  border-collapse: separate;
  border-spacing: 0;
  color: #111;
}

.grid .name {
  width: 146px;
}

.grid .value {
  width: 143px;
}

.grid .link {
  width: 12px;
}

.grid tr {
  height: 18px;
}

.grid .group th {
  padding: 0 2px;
  background: #dbdbdb;
  font-weight: normal;
  text-align: left;
}

.grid th svg {
  display: block;
  margin-left: -2px;
}

.grid td {
  height: 18px;
  padding: 0 2px;
  line-height: 16px;
  border-bottom: 1px dotted #777;
  border-right: 1px dotted #777;
  white-space: nowrap;
}

.grid td:first-child {
  padding: 0 0 0 8px;
}

.grid .in {
  padding-left: 5px;
}

.grid .off {
  color: #888;
}

.grid button {
  display: block;
  width: 100%;
  height: 16px;
  line-height: 14px;
  border: 1px solid #ddd;
  border-bottom: 2px solid #bbb;
  border-radius: 4px;
  background: #fff;
}

.grid td:last-child {
  padding: 0 1px;
}

.grid input[type="checkbox"] {
  display: grid;
  place-items: center;
  width: 13px;
  height: 13px;
  margin: 1px;
  border: 1px solid #666;
  border-radius: 3px;
  background: #f6f6f6;
  appearance: none;
}

.grid input:checked {
  background: #0b62ad;
  border-color: #0b62ad;
}

.grid input:checked::after {
  content: "";
  width: 7px;
  height: 4px;
  margin-bottom: 2px;
  border: solid #fff;
  border-width: 0 0 1px 1px;
  rotate: -45deg;
}

.grid .field {
  padding: 0;
}

.grid input[type="text"] {
  display: block;
  width: 100%;
  height: 17px;
  padding: 0 1px;
  border: 1px solid #000;
}

.properties footer {
  display: flex;
  align-items: center;
  justify-content: space-between;
  height: 27px;
  padding: 0 4px 0 3px;
}

.properties footer a {
  color: #1a6aa8;
}

.properties footer button {
  width: 71px;
  height: 20px;
  border-radius: 3px;
  background: #f8f8f8;
  color: #999;
}

/* open views */
.workspace {
  display: flex;
  flex-direction: column;
  min-width: 0;
}

.docs {
  display: flex;
  height: 20px;
  background: #cbcbcb;
  color: #555;
}

.docs button {
  display: flex;
  align-items: center;
  gap: 4px;
  width: 128px;
  padding: 2px 0 0 6px;
}

.docs .open {
  background: #fff;
  color: #222;
  font-weight: 600;
}

.docs .sec svg {
  fill: currentColor;
}

.docs .open .x {
  margin: 0 6px 0 auto;
}

.docs .more {
  width: 20px;
  margin-left: auto;
}

.view {
  flex: 1;
  min-height: 0;
  display: flex;
  position: relative;
  background: #fff;
}

.drawing {
  flex: 1;
  min-width: 0;
  height: 100%;
}

.navbar {
  position: absolute;
  top: 2px;
  right: 19px;
  width: 36px;
  height: 118px;
  border: 2px solid #c4c4c4;
  border-radius: 5px;
  background: #f5f5f5;
}

.navbar svg {
  display: block;
  margin: -2px;
  width: 36px;
  height: 118px;
}

.nav-2d {
  font-size: 9px;
  font-weight: 600;
  fill: #7a9cc0;
}

.vscroll {
  display: flex;
  align-items: center;
  justify-content: center;
  width: 18px;
  background: #efefef;
  border-right: 2px solid #fff;
}

.vscroll span {
  width: 2px;
  height: 17px;
  background: #777;
}

.viewbar {
  display: flex;
  align-items: center;
  gap: 5px;
  height: 18px;
  padding: 0 4px 0 26px;
  border-bottom: 1px solid #fff;
}

.viewbar button svg {
  display: block;
  width: 16px;
  height: 16px;
}

.viewbar .scale {
  width: 50px;
  text-align: left;
}

.hthumb {
  width: 17px;
  height: 2px;
  margin: 0 auto;
  background: #777;
}

.grip {
  width: 9px;
  height: 9px;
}

/* project browser */
.browser {
  border-left: 2px solid #cbcbcb;
  background: #fff;
}

.browser .title {
  padding-right: 2px;
  background: #efefef;
}

.tree {
  --dots: repeating-linear-gradient(#999 0 1px, transparent 1px 2px);
  margin-left: 6px;
  background: var(--dots) 4px 9px / 1px calc(100% - 18px) no-repeat;
}

.tree ul {
  margin-left: 20px;
  background: var(--dots) 4px 0 / 1px calc(100% - 9px) no-repeat;
}

.tree .end {
  background: #fff;
}

.tree .end .row {
  background: var(--dots) 4px 0 / 1px 9px no-repeat;
}

.tree .row,
.leaves li {
  display: flex;
  align-items: center;
  height: 18px;
  white-space: nowrap;
}

.tree i {
  height: 1px;
  background: repeating-linear-gradient(90deg, #999 0 1px, transparent 1px 2px);
}

.tree svg {
  width: 16px;
  height: 16px;
}

.leaves li,
.plain {
  padding-left: 5px;
}

.leaves i {
  width: 14px;
}

.leaves span,
.mid span {
  padding: 0 3px;
}

.mid i {
  width: 10px;
}

.top i {
  width: 7px;
}

.plain i {
  width: 11px;
}

.top span {
  padding-left: 6px;
}

.tree .picked {
  line-height: 18px;
  background: #e0e0e0;
  font-weight: bold;
}

.box {
  width: 9px;
  height: 9px;
  border: 1px solid #999;
  background: linear-gradient(#444, #444) center / 5px 1px no-repeat, #fff;
}

.box.plus {
  background: linear-gradient(#444, #444) center / 5px 1px no-repeat, linear-gradient(#444, #444) center / 1px 5px no-repeat, #fff;
}

/* status bar */
.status {
  display: flex;
  align-items: center;
  height: 26px;
  padding-top: 2px;
  background: #cbcbcb;
  border-bottom: 2px solid #484848;
}

.status svg {
  width: 16px;
  height: 16px;
}

.status .hint {
  flex: 0 0 60%;
  padding-left: 1px;
}

.combo.wide {
  width: 204px;
  height: 18px;
  margin-left: 8px;
  color: #777;
}

.status .gap {
  margin-left: 10px;
}

.status .count {
  width: 38px;
  padding-left: 4px;
}

.filters {
  display: flex;
  align-items: center;
  gap: 10px;
  margin: 0 70px 0 auto;
}

.filters b {
  margin-left: -10px;
  font-weight: normal;
}

/* section drawing */
.drawing {
  fill: none;
  stroke: #000;
  shape-rendering: crispEdges;
}

.drawing text {
  fill: #222;
  stroke: none;
  font-family: "Liberation Sans", Arial, sans-serif;
}

.bubble-text {
  font-size: 12px;
}

.level-text {
  font-size: 8px;
}

.thick {
  stroke-width: 2;
}

.diagonal {
  stroke: #222;
}

.white {
  fill: #fff;
}

.erase {
  fill: #fff;
  stroke: none;
}

.shade {
  fill: #c0c0c0;
}

.flat {
  fill: #c0c0c0;
  stroke: none;
}

.solid {
  fill: #000;
}

.bars {
  fill: url(#bars);
}

.lattice {
  stroke: #fff;
  stroke-dasharray: 2 2;
}

.concrete {
  fill: #808080;
}

.earth {
  fill: url(#earth);
}

.hatch {
  fill: url(#weave);
  stroke: none;
}

.datum {
  stroke-dasharray: 32 8 13 8;
  stroke-dashoffset: 2;
}

.halo {
  stroke: #6f8fbd;
  stroke-width: 3;
}

.navy {
  stroke: #14284f;
}

.picked-box {
  stroke: #6f8fbd;
}

.head-black {
  fill: #000;
}

.head-blue {
  fill: #003a9b;
  stroke: #123c78;
}
```
FILE: drawing.js
```
const svg = document.getElementById("drawing");
let out = "";

function path(d, cls = "") {
  out += `<path class="${cls}" d="${d}"/>`;
}

function line(x1, y1, x2, y2, cls) {
  // half pixel keeps single lines sharp
  path(`M${x1 + 0.5} ${y1 + 0.5}L${x2 + 0.5} ${y2 + 0.5}`, cls);
}

function rect(x, y, x2, y2, cls = "") {
  out += `<rect class="${cls}" x="${x + 0.5}" y="${y + 0.5}" width="${x2 - x}" height="${y2 - y}"/>`;
}

function verticals(xs, top, bottom, cls) {
  xs.forEach((x) => line(x, top, x, bottom, cls));
}

function label(x, y, text, cls) {
  out += `<text class="${cls}" x="${x}" y="${y}">${text}</text>`;
}

function door(x, floor, tip, width = 20, height = 42) {
  const r = x + width;
  const top = floor - height;
  rect(x, top, r, floor, "white");
  line(x, top + 2, r, top + 2);
  line(x + 1, top + 2, x + 1, floor);
  line(r - 1, top + 2, r - 1, floor);
  const a = tip === "right" ? x + 2 : r - 2;
  const b = tip === "right" ? r - 2 : x + 2;
  path(`M${a} ${top + 3}L${b} ${top + height / 2 + 2}L${a} ${floor}`, "diagonal");
}

function lift(x, floor) {
  rect(x, floor - 52, x + 34, floor, "white");
  line(x, floor - 51, x + 34, floor - 51);
  rect(x + 3, floor - 49, x + 31, floor);
  line(x + 17, floor - 49, x + 17, floor);
  line(x + 1, floor - 50, x + 1, floor);
  path(`M${x + 12} ${floor - 20}h4v2M${x + 19} ${floor - 18}v-2h4`);
  rect(x + 37, floor - 22, x + 39, floor - 16);
}

function slats(floor) {
  for (let y = floor - 40; y < floor; y += 4) line(1040, y, 1087, y);
  line(1040, floor - 57, 1040, floor - 3, "thick");
  line(1086, floor - 57, 1086, floor - 20, "thick");
}

out += `<defs>
  <pattern id="weave" width="26" height="26" patternUnits="userSpaceOnUse" stroke="#c9c9c9">
    <path d="M0 2.500h13M0 6.500h13M0 10.500h13M13 15.500h13M13 19.500h13M13 23.500h13M15.500 0v13M19.500 0v13M23.500 0v13M2.500 13v13M6.500 13v13M10.500 13v13"/>
  </pattern>
  <pattern id="earth" width="26" height="26" patternUnits="userSpaceOnUse" stroke="#503829">
    <rect width="26" height="26" fill="#5f4537" stroke="none"/>
    <path d="M0 2.500h13M0 6.500h13M0 10.500h13M13 15.500h13M13 19.500h13M13 23.500h13M15.500 0v13M19.500 0v13M23.500 0v13M2.500 13v13M6.500 13v13M10.500 13v13"/>
  </pattern>
  <pattern id="bars" width="4" height="8" patternUnits="userSpaceOnUse">
    <rect width="3" height="8" fill="#000" stroke="none"/>
  </pattern>
</defs>`;

const floors = [730, 807, 884];

// ground
path("M1651 890H1750V884H1763V832H1921V884H1932V832H1937V903H1651Z", "hatch");
rect(1941, 832, 2018, 903, "earth");
rect(1941, 826, 2018, 832, "concrete");

// saw-tooth roof
[626, 780, 934, 1087, 1241, 1395, 1548].forEach((x) => {
  path(`M${x + 4} 653L${x + 117} 633L${x + 153} 653Z`, "flat");
  path(`M${x} 653V651L${x + 129} 628V631L${x + 4} 653`, "white");
  path(`M${x + 115} 633L${x + 153} 654M${x + 119} 633L${x + 155} 653`);
  path(`M${x + 117} 634L${x + 154} 654`);
});

// outline, slabs and parapets
rect(442, 607, 2018, 903);
rect(444, 648, 477, 653);
rect(473, 648, 477, 653, "shade");
line(444, 653, 1998, 653);
line(444, 659, 1998, 659);
line(444, 648, 444, 813);
line(473, 653, 473, 890);
line(476, 659, 476, 807, "thick");
rect(473, 807, 477, 884, "shade");
line(488, 730, 1998, 730);
line(444, 736, 473, 736);
line(488, 736, 1998, 736);
line(473, 807, 1548, 807);
line(445, 813, 1548, 813);
line(442, 884, 1548, 884);
line(442, 890, 1548, 890);
rect(1968, 648, 1972, 653, "shade");
path("M1968.500 653V648.500H1998.500V736");
path("M1970 659V730", "thick");
verticals([1972], 648, 736);

// bays
const bays = [[488, 626], [638, 769], [780, 922], [934, 1087], [1099, 1241], [1252, 1395], [1406, 1537]];
[[665, 730], [742, 807], [818, 884]].forEach(([top, bottom], i) => {
  bays.forEach(([a, b], n) => {
    if (i === 1 && n === 0) {
      path(`M488.500 736V807M548 ${top}.500H626.500V807`);
    } else {
      path(`M${a}.500 ${bottom}V${top}.500H${b}.500V${bottom}`);
    }
  });
});
path("M1548.500 730V665.500H1752.500V730M1763.500 730V665.500H1921.500V730");
path("M1548 742.500H1752M1763 742.500H1921");
verticals([1548], 736, 890);
verticals([1537], 807, 884);
verticals([1752, 1763, 1921], 736, 884);
verticals([1932], 659, 884);

// partitions
verticals([830, 833, 887, 890], 665, 730);
rect(871, 665, 874, 730, "shade");
verticals([829, 891], 692, 728);
floors.slice(0, 2).forEach((f) => {
  verticals([938, 978, 1026, 1039], f - 65, f);
  verticals([979, 1026], f - 18, f);
  verticals([1190, 1193, 1344, 1347, 1497, 1500], f - 65, f);
});
floors.forEach((f) => {
  verticals([1332, 1334], f - 65, f);
  rect(1485, f - 65, 1488, f, "shade");
});
rect(1178, 742, 1181, 807, "shade");
rect(1178, 818, 1181, 884, "shade");
verticals([1039, 1139, 1193], 818, 884);
verticals([1140, 1192], 842, 884);
line(978, 773, 1026, 773);
verticals([575, 623], 742, 807);
rect(1647, 665, 1650, 730, "shade");
rect(1694, 665, 1697, 730, "shade");

// glazed panels
[675, 834].forEach((x) => {
  rect(x, 742, x + 53, 806);
  verticals([x + 1, x + 26, x + 27, x + 52], 742, 806);
});

// doors
[600, 1219, 1372, 1516].forEach((x) => {
  door(x, 730, "right");
  door(x, 807, "right");
});
door(641, 730, "left");
door(847, 730, "left");
door(1671, 730, "right");
door(1700, 730, "left");
door(1788, 826, "right");
door(1849, 826, "right");
door(1878, 826, "left");
door(1005, 884, "right", 18);
door(1152, 884, "left", 22);
rect(493, 845, 525, 884, "white");
line(509, 845, 509, 884);
path("M509 846L494 865L509 884L525 865Z", "diagonal");
floors.forEach((f) => lift(938, f));

// window in the basement
rect(1413, 836, 1461, 884, "white");
line(1414, 836, 1414, 884);
line(1437, 836, 1437, 884);
rect(1416, 839, 1435, 864);
rect(1439, 839, 1458, 864);
rect(1416, 868, 1435, 879);
rect(1439, 868, 1458, 879);
line(1446, 851, 1452, 851);

// railing and straight stairs
line(1039, 713, 1087, 713, "thick");
for (let x = 1044; x < 1087; x += 5) line(x, 713, x, 730);
slats(807);
slats(884);

// spiral stair
path("M549 713L527 722L511 732L505 741V767L510 770L516 760L512 750L520 740L527 732V722Z", "solid");
path("M527 722L549 713V727L535 738L520 741L527 730Z", "bars");
path("M510 748L532 767L547 769L582 786V804H576L558 795L545 788L531 783L510 770Z", "bars");
path("M548 714V728L534 740V754L547 769L582 786V805M512 750L532 766M514 758L545 786", "thick");
path("M540 718V732L532 742V754L537 757V740L543 732V718ZM547 769L582 786V792L562 780Z", "solid");
for (let y = 741; y < 762; y += 4) line(514, y, 533, y);
for (let y = 764; y < 784; y += 4) line(508, y, 545, y);
path("M505 767Q507 774 514 778L577 807M548 730V738Q533 748 542 760L548 768M548 788L558 807", "diagonal");

// right wing
rect(1645, 743, 1655, 760, "flat");
line(1644, 742, 1644, 849);
line(1655, 742, 1655, 826);
rect(1649, 755, 1651, 842, "thick");
path("M1650.500 757V842", "lattice");
verticals([1648, 1651], 842, 884);
rect(1653, 826, 1662, 890, "concrete");
line(1548, 849, 1644, 849);
line(1548, 868, 1648, 868);
line(1548, 874, 1648, 874);
line(1662, 837, 1750, 837);
line(1662, 842, 1750, 842);
line(1662, 855, 1750, 855);
line(1750, 832, 1750, 890);
line(1651, 890, 1750, 890);
line(1651, 890, 1651, 903);
rect(1754, 826, 1936, 832, "white");
rect(1932, 736, 1936, 826, "shade");
rect(1933, 759, 1936, 811, "thick white");

// grid bubbles, the name covers the middle of the circle
const grids = [[477, "00-10"], [626, "00-9"], [780, "00-8"], [934, "00-7"], [1087, "00-6"], [1241, "00-5"], [1395, "00-4"], [1548, "00-3"], [1752, "00-2"], [1932, "00-1"]];
grids.forEach(([x, name]) => {
  const wide = name.length > 4;
  out += `<circle cx="${x + 0.5}" cy="546" r="13"/>`;
  rect(x - 17, 540, x + 16, 552, "erase");
  if (!wide) line(x + 13, 544, x + 13, 548);
  label(wide ? x - 16 : x - 13, 550, name, "bubble-text");
  [[559, 573], [580, 586], [592, 607], [905, 919], [926, 932], [938, 953]].forEach(([a, b]) => line(x, a, x, b));
});

// levels
const levels = [
  [634, 625, "1000.00", "C-4", "black"],
  [653, 644, "900.00", "B-3", "blue"],
  [673, 663, "800.00", "A-2", "blue"],
  [711, 701, "600.00", "C-3", "black"],
  [730, 721, "500.00", "B-2", "blue"],
  [749, 740, "400.00", "A-1", "blue"],
  [788, 778, "200.00", "C-2", "black"],
  [807, 797, "100.00", "B-1", "blue"],
  [826, 817, "0.00", "A-0", "blue"],
  [865, 855, "-200.00", "C-1", "blue"],
  [884, 874, "-300.00", "B-0", "blue"],
];
levels.forEach(([y, head, height, name, color]) => {
  const selected = name === "A-2";
  if (selected) {
    line(393, y, 2067, y, "datum halo");
    line(2058, head, 2106, head, "halo");
  }
  line(393, y, 2067, y, selected ? "datum navy" : "datum");
  path(`M2067.500 ${head - 9}V${y}M2058 ${head}.500H2106`, color === "blue" ? "head-blue" : "");
  path(`M2058 ${head}H2067V${y}Z`, "head-" + color);
  label(2071, head - 3, height, "level-text");
  label(2071, head + 7, name, "level-text");
});
rect(2067, 650, 2100, 667, "picked-box");
rect(2067, 667, 2088, 676, "picked-box");

svg.innerHTML = out;
```
